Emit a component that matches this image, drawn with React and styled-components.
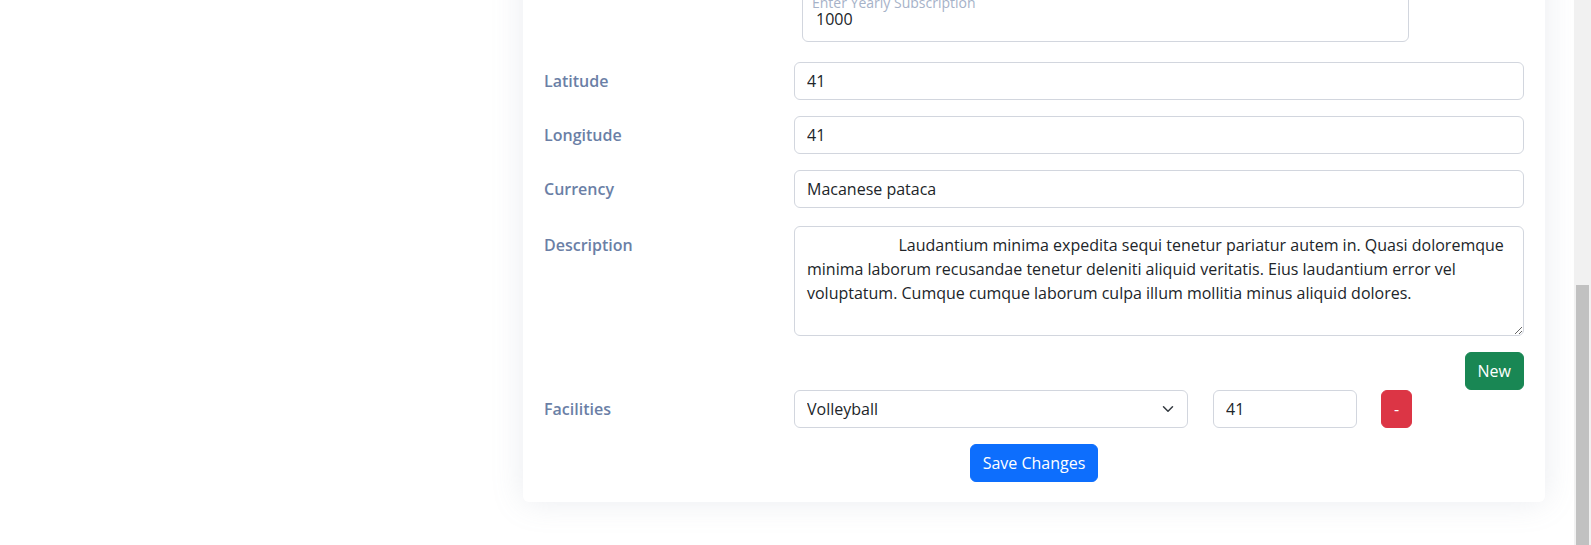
import React from "react";
import styled, { createGlobalStyle } from "styled-components";

const GlobalStyle = createGlobalStyle`
  html, body {
    margin: 0;
    padding: 0;
    background: #ffffff;
    overflow: hidden;
  }
  body {
    font-family: "Open Sans", "Liberation Sans", sans-serif;
    font-size: 16px;
    color: #212529;
  }
  * { box-sizing: border-box; }
`;

const Viewport = styled.div`
  display: flex;
  height: 100vh;
  width: 100vw;
`;

const PageArea = styled.main`
  flex: 1;
  display: flex;
  flex-direction: column;
  justify-content: flex-end;
  overflow: hidden;
  padding: 0 29px 43px 523px;
`;

const ScrollRail = styled.div`
  width: 17px;
  flex: none;
  background: #f1f1f1;
  display: flex;
  flex-direction: column;
  justify-content: flex-end;
`;

const ScrollThumb = styled.div`
  height: 260px;
  margin: 0 2px;
  background: #c1c1c1;
`;

const Card = styled.section`
  flex: none;
  background: #ffffff;
  border-radius: 6px;
  box-shadow: 0 0 2rem 0 rgba(136, 152, 170, 0.18);
  padding: 20px 21px 20px 21px;
`;

const FormRow = styled.div`
  display: grid;
  grid-template-columns: 250px 1fr;
  margin-bottom: ${(p) => p.$mb ?? 16}px;
`;

const Label = styled.label`
  padding-top: 7px;
  line-height: 24px;
  font-size: 16px;
  font-weight: 600;
  color: #6b7fa6;
`;

const Input = styled.input`
  width: 100%;
  height: 38px;
  padding: 6px 12px;
  font-family: inherit;
  font-size: 16px;
  line-height: 24px;
  color: #212529;
  background: #ffffff;
  border: 1px solid #d2d6de;
  border-radius: 6px;
  outline: none;
`;

const TextArea = styled.textarea`
  width: 100%;
  height: 110px;
  padding: 6px 12px;
  font-family: inherit;
  font-size: 16px;
  line-height: 24px;
  color: #212529;
  background: #ffffff;
  border: 1px solid #d2d6de;
  border-radius: 6px;
  resize: vertical;
  outline: none;
  display: block;
`;

const FloatingBox = styled.div`
  margin-left: 8px;
  width: 607px;
  height: 58px;
  border: 1px solid #d2d6de;
  border-radius: 6px;
  padding: 10px 9px 10px 9px;
  display: flex;
  flex-direction: column;
`;

const FloatingLabel = styled.span`
  font-size: 14px;
  line-height: 16px;
  color: #a6b2c8;
`;

const FloatingValue = styled.input`
  border: none;
  outline: none;
  margin-top: -4px;
  padding: 0 0 0 4px;
  height: 24px;
  font-family: inherit;
  font-size: 16px;
  line-height: 24px;
  color: #212529;
  background: transparent;
`;

const ActionRow = styled.div`
  display: flex;
  justify-content: ${(p) => p.$justify || "flex-end"};
`;

const Button = styled.button`
  font-family: inherit;
  font-size: 16px;
  line-height: 24px;
  padding: 6px 12px;
  border-radius: 6px;
  color: #ffffff;
  background: ${(p) => p.$bg};
  border: 1px solid ${(p) => p.$bg};
  cursor: pointer;
`;

const FacilityLine = styled.div`
  display: flex;
  align-items: center;
`;

const SelectWrap = styled.div`
  position: relative;
  width: 394px;
  margin-right: 25px;
`;

const Select = styled.select`
  width: 100%;
  height: 38px;
  padding: 6px 36px 6px 12px;
  font-family: inherit;
  font-size: 16px;
  line-height: 24px;
  color: #212529;
  background: #ffffff;
  border: 1px solid #d2d6de;
  border-radius: 6px;
  appearance: none;
  -webkit-appearance: none;
  outline: none;
`;

const Chevron = styled.svg`
  position: absolute;
  right: 12px;
  top: 13px;
  pointer-events: none;
`;

const QtyInput = styled(Input)`
  width: 144px;
  margin-right: 24px;
`;

const description =
  "                      Laudantium minima expedita sequi tenetur pariatur autem in. Quasi doloremque minima laborum recusandae tenetur deleniti aliquid veritatis. Eius laudantium error vel voluptatum. Cumque cumque laborum culpa illum mollitia minus aliquid dolores.";

export default function App() {
  return (
    <>
      <GlobalStyle />
      <Viewport>
        <PageArea>
          <Card>
            <FormRow $mb={20}>
              <span />
              <FloatingBox>
                <FloatingLabel>Enter Yearly Subscription</FloatingLabel>
                <FloatingValue defaultValue="1000" />
              </FloatingBox>
            </FormRow>
            <FormRow>
              <Label>Latitude</Label>
              <Input defaultValue="41" />
            </FormRow>
            <FormRow>
              <Label>Longitude</Label>
              <Input defaultValue="41" />
            </FormRow>
            <FormRow $mb={18}>
              <Label>Currency</Label>
              <Input defaultValue="Macanese pataca" />
            </FormRow>
            <FormRow>
              <Label>Description</Label>
              <TextArea rows={4} defaultValue={description} />
            </FormRow>
            <ActionRow>
              <Button type="button" $bg="#198754">New</Button>
            </ActionRow>
            <FormRow>
              <Label>Facilities</Label>
              <FacilityLine>
                <SelectWrap>
                  <Select defaultValue="Volleyball">
                    <option>Volleyball</option>
                    <option>Football</option>
                    <option>Swimming Pool</option>
                  </Select>
                  <Chevron width="16" height="12" viewBox="0 0 16 16">
                    <path
                      d="m2 5 6 6 6-6"
                      fill="none"
                      stroke="#343a40"
                      strokeWidth="2"
                      strokeLinecap="round"
                      strokeLinejoin="round"
                    />
                  </Chevron>
                </SelectWrap>
                <QtyInput defaultValue="41" />
                <Button type="button" $bg="#dc3545">-</Button>
              </FacilityLine>
            </FormRow>
            <ActionRow $justify="center">
              <Button type="button" $bg="#0d6efd">Save Changes</Button>
            </ActionRow>
          </Card>
        </PageArea>
        <ScrollRail>
          <ScrollThumb />
        </ScrollRail>
      </Viewport>
    </>
  );
}
